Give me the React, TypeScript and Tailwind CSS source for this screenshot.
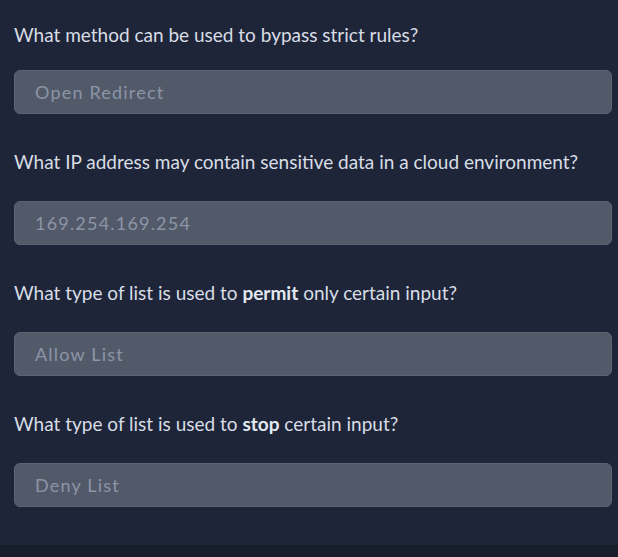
import React from "react";

type Question = {
  id: number;
  prompt: React.ReactNode;
  answer: string;
};

const questions: Question[] = [
  {
    id: 1,
    prompt: "What method can be used to bypass strict rules?",
    answer: "Open Redirect",
  },
  {
    id: 2,
    prompt: "What IP address may contain sensitive data in a cloud environment?",
    answer: "169.254.169.254",
  },
  {
    id: 3,
    prompt: (
      <>
        What type of list is used to <b className="font-bold text-[#e2e8f0]">permit</b> only certain input?
      </>
    ),
    answer: "Allow List",
  },
  {
    id: 4,
    prompt: (
      <>
        What type of list is used to <b className="font-bold text-[#e2e8f0]">stop</b> certain input?
      </>
    ),
    answer: "Deny List",
  },
];

const App = () => {
  return (
    <div className="w-[618px] h-[557px] flex flex-col bg-[#1e2539] font-['Lato',sans-serif] overflow-hidden">
      <div className="flex-1 pt-[23px] pl-[14px] pr-[6px]">
        {questions.map((q, i) => (
          <div key={q.id} className={i === 0 ? "" : "mt-[36px]"}>
            <p className="text-[19px] leading-[24px] text-[#d8dde5]">{q.prompt}</p>
            <div
              className={`${
                i === 0 ? "mt-[23px]" : "mt-[27px]"
              } h-[44px] rounded-[6px] border border-[#5b6374] bg-[#525a6a] flex items-center px-[20px]`}
            >
              <span className="text-[18px] tracking-[1.2px] text-[#8c95a6]">{q.answer}</span>
            </div>
          </div>
        ))}
      </div>
      <div className="h-[12px] bg-[#191e2d]" />
    </div>
  );
};

export default App;
